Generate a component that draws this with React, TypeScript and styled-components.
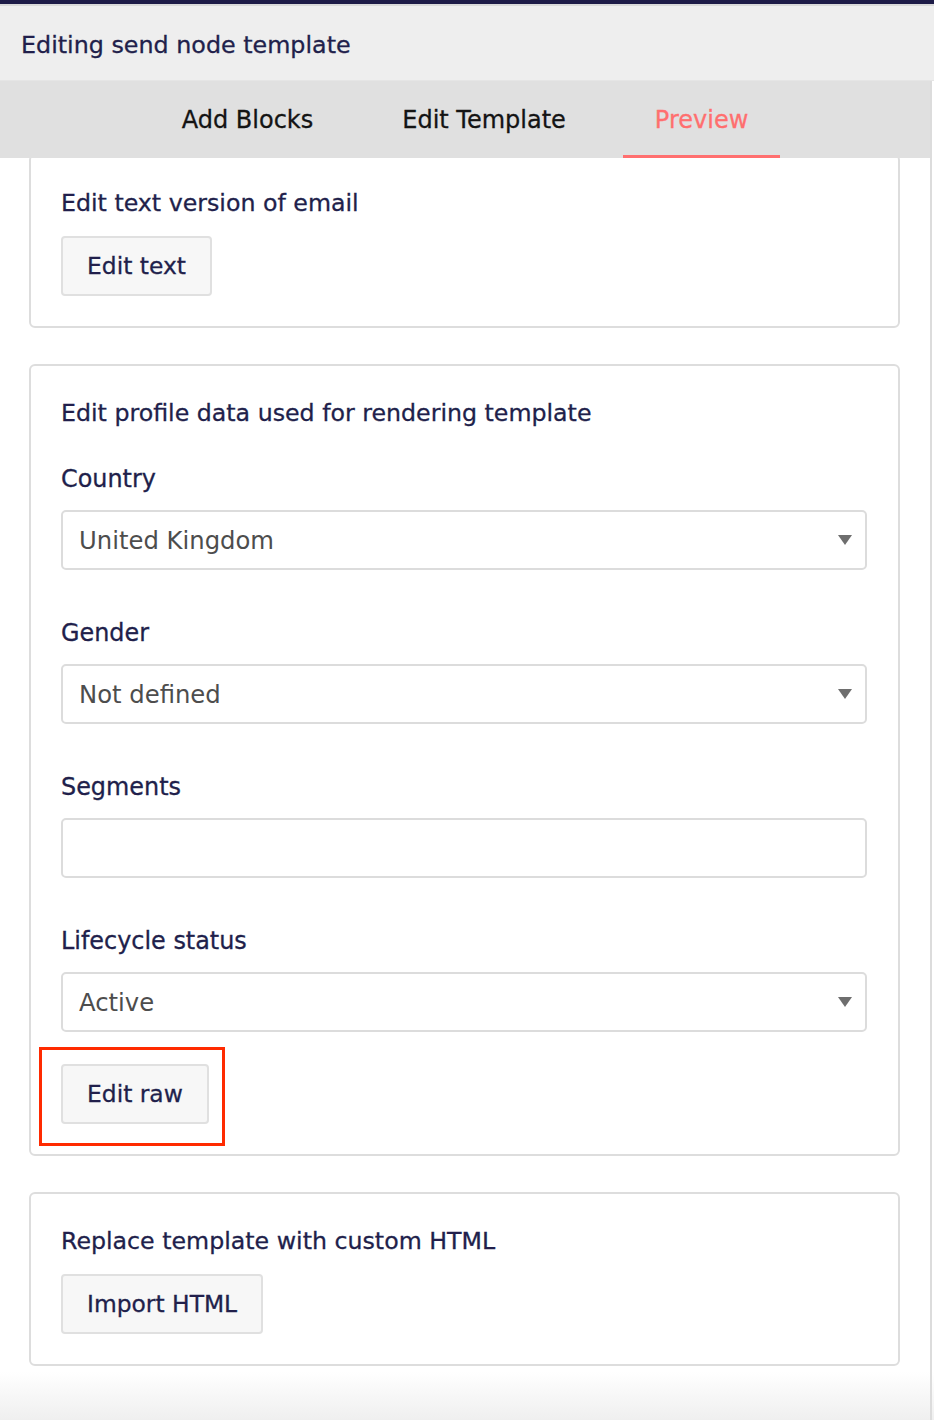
import styled, { createGlobalStyle } from "styled-components";

const GlobalStyle = createGlobalStyle`
    html, body {
        margin: 0;
        padding: 0;
        background: #ffffff;
    }
    * {
        box-sizing: border-box;
    }
`

const NAVY = '#211f4b'

type Field = { label: string; value?: string; select?: boolean }

const fields: Field[] = [
    {label: 'Country', value: 'United Kingdom', select: true},
    {label: 'Gender', value: 'Not defined', select: true},
    {label: 'Segments'},
    {label: 'Lifecycle status', value: 'Active', select: true},
]

const tabs = ['Add Blocks', 'Edit Template', 'Preview']

export default function App() {
    return (
        <>
            <GlobalStyle/>
            <Page>
                <TopStrip/>
                <Header>Editing send node template</Header>
                <Panel>
                    <TabBar>
                        {tabs.map(tab => (
                            <Tab key={tab} active={tab === 'Preview'}>{tab}</Tab>
                        ))}
                    </TabBar>
                    <Content>
                        <Card first>
                            <CardTitle>Edit text version of email</CardTitle>
                            <Button>Edit text</Button>
                        </Card>

                        <Card>
                            <CardTitle>Edit profile data used for rendering template</CardTitle>
                            <FieldGroup>
                                {fields.map(field => (
                                    <FieldRow key={field.label}>
                                        <Label>{field.label}</Label>
                                        <SelectBox>
                                            {field.value && <SelectValue>{field.value}</SelectValue>}
                                            {field.select && <Caret/>}
                                        </SelectBox>
                                    </FieldRow>
                                ))}
                            </FieldGroup>
                            <Highlighted>
                                <Button>Edit raw</Button>
                                <RedOutline/>
                            </Highlighted>
                        </Card>

                        <Card>
                            <CardTitle>Replace template with custom HTML</CardTitle>
                            <Button>Import HTML</Button>
                        </Card>
                    </Content>
                </Panel>
            </Page>
        </>
    );
}

const Page = styled.div`
    width: 934px;
    height: 1420px;
    overflow: hidden;
    font-family: "DejaVu Sans", "Liberation Sans", sans-serif;
    background: linear-gradient(to bottom, #ffffff 0, #ffffff 1372px, #efefef 1420px);
    display: flex;
    flex-direction: column;
`
const TopStrip = styled.div`
    height: 6px;
    flex-shrink: 0;
    background: #1d1b47;
    border-bottom: 2px solid #d9d9d9;
`
const Header = styled.div`
    height: 75px;
    flex-shrink: 0;
    display: flex;
    align-items: center;
    padding: 4px 0 0 21px;
    background: #eeeeee;
    border-bottom: 1px solid #e5e5e5;
    color: ${NAVY};
    font-size: 23.8px;
    -webkit-text-stroke: 0.3px ${NAVY};
`
const Panel = styled.div`
    width: 932px;
    flex: 1;
    border-right: 2px solid #dcdcdc;
    display: flex;
    flex-direction: column;
    overflow: hidden;
`
const TabBar = styled.div`
    height: 77px;
    flex-shrink: 0;
    display: flex;
    justify-content: center;
    gap: 25px;
    background: #e0e0e0;
    position: relative;
    z-index: 1;
`
const Tab = styled.div<{ active?: boolean }>`
    display: flex;
    align-items: center;
    padding: 3px 32px 0;
    font-size: 24px;
    color: ${props => props.active ? '#ff6f6f' : '#141414'};
    -webkit-text-stroke: 0.3px ${props => props.active ? '#ff6f6f' : '#141414'};
    border-bottom: 3px solid ${props => props.active ? '#ff6f6f' : 'transparent'};
`
const Content = styled.div`
    display: flex;
    flex-direction: column;
    gap: 36px;
    padding: 0 30px 0 29px;
`
const Card = styled.div<{ first?: boolean }>`
    display: flex;
    flex-direction: column;
    align-items: flex-start;
    gap: 16px;
    margin-top: ${props => props.first ? '-4px' : '0'};
    padding: 30px 31px 30px 30px;
    border: 2px solid #dddddd;
    border-radius: 6px;
    background: #ffffff;
`
const CardTitle = styled.div`
    height: 34px;
    line-height: 34px;
    font-size: 23.7px;
    color: ${NAVY};
    -webkit-text-stroke: 0.3px ${NAVY};
`
const FieldGroup = styled.div`
    align-self: stretch;
    display: flex;
    flex-direction: column;
    gap: 46px;
    margin: 16px 0 16px;
`
const FieldRow = styled.div`
    display: flex;
    flex-direction: column;
    gap: 14px;
`
const Label = styled.div`
    height: 34px;
    line-height: 34px;
    font-size: 23.9px;
    color: ${NAVY};
    -webkit-text-stroke: 0.3px ${NAVY};
`
const SelectBox = styled.div`
    height: 60px;
    display: flex;
    align-items: center;
    justify-content: space-between;
    padding: 0 13px 0 16px;
    border: 2px solid #dcdcdc;
    border-radius: 5px;
    background: #ffffff;
`
const SelectValue = styled.span`
    font-size: 24.3px;
    color: #4d4d4d;
`
const Caret = styled.span`
    margin-left: auto;
    width: 0;
    height: 0;
    border-left: 7.5px solid transparent;
    border-right: 7.5px solid transparent;
    border-top: 10px solid #6e6e6e;
`
const Highlighted = styled.div`
    position: relative;
`
const RedOutline = styled.div`
    position: absolute;
    left: -22px;
    top: -17px;
    width: 186px;
    height: 99px;
    border: 3px solid #ff2a00;
    pointer-events: none;
`
const Button = styled.button`
    height: 60px;
    padding: 0 24px;
    border: 2px solid #e0e0e0;
    border-radius: 4px;
    background: #f7f7f7;
    font-family: inherit;
    font-size: 23.4px;
    color: ${NAVY};
    -webkit-text-stroke: 0.3px ${NAVY};
    cursor: pointer;
`
